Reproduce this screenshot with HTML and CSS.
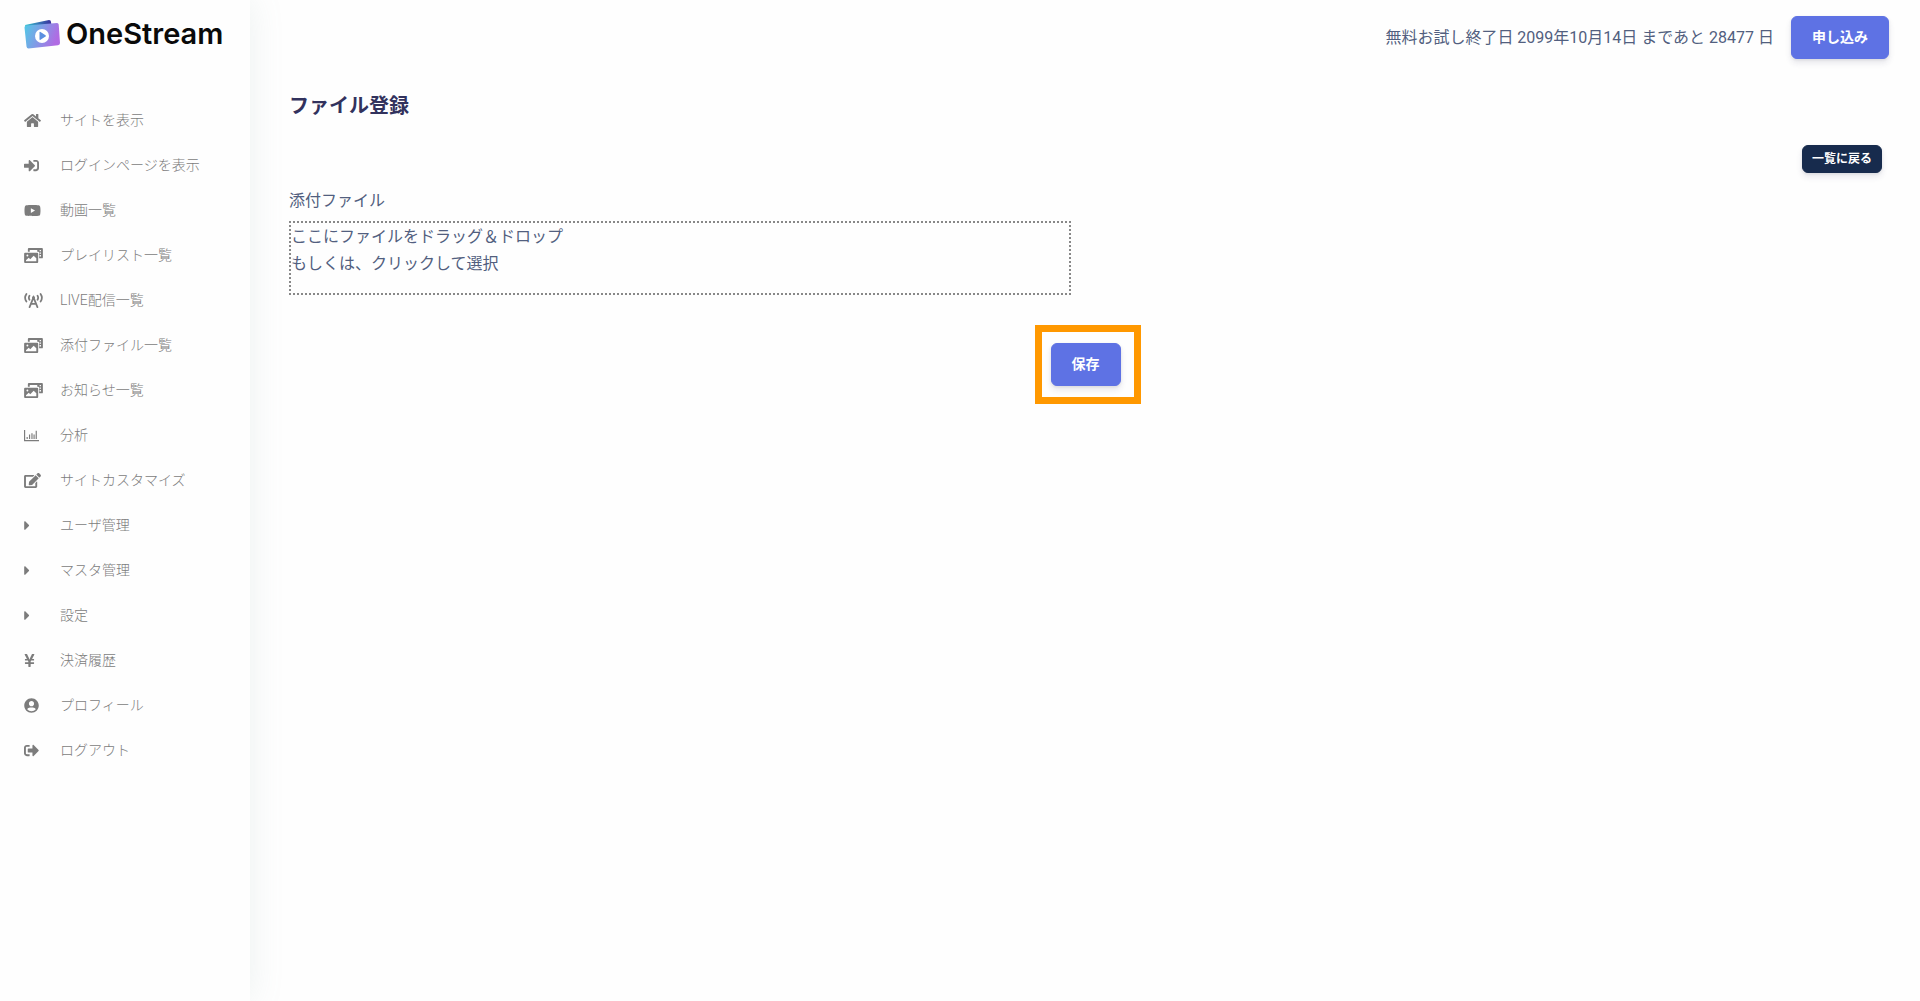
FILE: index.html
```html
<!DOCTYPE html>
<html lang="ja">
<head>
    <meta charset="UTF-8">
    <meta name="viewport" content="width=device-width, initial-scale=1.0">
    <title>ファイル登録 | OneStream</title>
    <link rel="stylesheet" href="styles.css">
</head>
<body>
    <!-- shared icon shapes -->
    <svg class="icon-defs" aria-hidden="true">
        <symbol id="i-home" viewBox="0 0 576 512"><path d="M280.37 148.26L96 300.11V464a16 16 0 0 0 16 16l112.06-.29a16 16 0 0 0 15.92-16V368a16 16 0 0 1 16-16h64a16 16 0 0 1 16 16v95.64a16 16 0 0 0 16 16.05L464 480a16 16 0 0 0 16-16V300L295.67 148.26a12.19 12.19 0 0 0-15.3 0zM571.6 251.47L488 182.56V44.05a12 12 0 0 0-12-12h-56a12 12 0 0 0-12 12v72.61L318.47 43a48 48 0 0 0-61 0L4.34 251.47a12 12 0 0 0-1.6 16.9l25.5 31A12 12 0 0 0 45.15 301l235.22-193.74a12.19 12.19 0 0 1 15.3 0L530.9 301a12 12 0 0 0 16.9-1.6l25.5-31a12 12 0 0 0-1.7-16.93z"/></symbol>
        <symbol id="i-login" viewBox="0 0 512 512"><path d="M416 448h-84c-6.6 0-12-5.4-12-12v-40c0-6.6 5.4-12 12-12h84c17.7 0 32-14.3 32-32V160c0-17.7-14.3-32-32-32h-84c-6.6 0-12-5.4-12-12V76c0-6.6 5.4-12 12-12h84c53 0 96 43 96 96v192c0 53-43 96-96 96zm-47-201L201 79c-15-15-41-4.5-41 17v96H24c-13.3 0-24 10.7-24 24v96c0 13.3 10.7 24 24 24h136v96c0 21.5 26 32 41 17l168-168c9.3-9.4 9.3-24.6 0-34z"/></symbol>
        <symbol id="i-video" viewBox="0 0 576 512"><path d="M549.655 124.083c-6.281-23.65-24.787-42.276-48.284-48.597C458.781 64 288 64 288 64S117.22 64 74.629 75.486c-23.497 6.322-42.003 24.947-48.284 48.597-11.412 42.867-11.412 132.305-11.412 132.305s0 89.438 11.412 132.305c6.281 23.65 24.787 41.5 48.284 47.821C117.22 448 288 448 288 448s170.78 0 213.371-11.486c23.497-6.321 42.003-24.171 48.284-47.821 11.412-42.867 11.412-132.305 11.412-132.305s0-89.438-11.412-132.305zm-317.51 213.508V175.185l142.739 81.205-142.739 81.201z"/></symbol>
        <symbol id="i-media" viewBox="0 0 640 512"><path fill-rule="evenodd" d="M608 0H160a32 32 0 0 0-32 32v96h64V64h256v64h32a32 32 0 0 1 32 32v192h96a32 32 0 0 0 32-32V32a32 32 0 0 0-32-32zM537 64h30a9 9 0 0 1 9 9v30a9 9 0 0 1-9 9h-30a9 9 0 0 1-9-9V73a9 9 0 0 1 9-9zM537 152h30a9 9 0 0 1 9 9v30a9 9 0 0 1-9 9h-30a9 9 0 0 1-9-9v-30a9 9 0 0 1 9-9zM537 240h30a9 9 0 0 1 9 9v30a9 9 0 0 1-9 9h-30a9 9 0 0 1-9-9v-30a9 9 0 0 1 9-9zM32 160h416a32 32 0 0 1 32 32v288a32 32 0 0 1-32 32H32a32 32 0 0 1-32-32V192a32 32 0 0 1 32-32zM112 224a32 32 0 1 0 0 64a32 32 0 1 0 0-64zM64 448h352v-96l-90-91-116 123-54-53-92 85z"/></symbol>
        <symbol id="i-tower" viewBox="0 0 640 512"><path class="stroke" d="M78 32c-62 90-62 170 0 260M562 32c62 90 62 170 0 260M182 92c-28 48-28 92 0 140M458 92c28 48 28 92 0 140"/><path class="stroke" d="M186 484L320 150l134 334M236 370h168"/><circle cx="320" cy="160" r="50"/></symbol>
        <symbol id="i-chart" viewBox="0 0 512 512"><path d="M0 64h40v346h472v40H0zM88 304h40v70H88zM170 226h40v148h-40zM252 176h40v198h-40zM324 226h40v148h-40zM398 90h40v284h-40z"/></symbol>
        <symbol id="i-edit" viewBox="0 0 576 512"><path d="M402.6 83.2l90.2 90.2c3.8 3.8 3.8 10 0 13.8L274.4 405.6l-92.8 10.3c-12.4 1.4-22.9-9.1-21.5-21.5l10.3-92.8L388.8 83.2c3.8-3.8 10-3.8 13.8 0zm162-22.9l-48.8-48.8c-15.2-15.2-39.9-15.2-55.2 0l-35.4 35.4c-3.8 3.8-3.8 10 0 13.8l90.2 90.2c3.8 3.8 10 3.8 13.8 0l35.4-35.4c15.2-15.3 15.2-40 0-55.2zM384 346.2V448H64V128h229.8c3.2 0 6.2-1.3 8.5-3.5l40-40c7.6-7.6 2.2-20.5-8.5-20.5H48C21.5 64 0 85.5 0 112v352c0 26.5 21.5 48 48 48h352c26.5 0 48-21.5 48-48V306.2c0-10.7-12.9-16-20.5-8.5l-40 40c-2.2 2.3-3.5 5.3-3.5 8.5z"/></symbol>
        <symbol id="i-caret" viewBox="0 0 192 512"><path d="M0 384.662V127.338c0-17.818 21.543-26.741 34.142-14.142l128.662 128.662c7.81 7.81 7.81 20.474 0 28.284L34.142 398.804C21.543 411.404 0 402.48 0 384.662z"/></symbol>
        <symbol id="i-yen" viewBox="0 0 384 512"><path d="M351.2 32h-65.3c-4.6 0-8.8 2.6-10.8 6.7l-55.4 113.2c-14.5 34.7-27.1 71.9-27.1 71.9h-1.3s-12.6-37.2-27.1-71.9L108.8 38.7c-2-4.1-6.2-6.7-10.8-6.7H32.8c-9.1 0-14.8 9.7-10.6 17.6L102.3 200H44c-6.6 0-12 5.4-12 12v32c0 6.6 5.4 12 12 12h88.2l19.8 37.2V320H44c-6.6 0-12 5.4-12 12v32c0 6.6 5.4 12 12 12h108v92c0 6.6 5.4 12 12 12h56c6.6 0 12-5.4 12-12v-92h108c6.6 0 12-5.4 12-12v-32c0-6.6-5.4-12-12-12H232v-26.8l19.8-37.2H340c6.6 0 12-5.4 12-12v-32c0-6.6-5.4-12-12-12h-58.3l80.1-150.4c4.3-7.9-1.5-17.6-10.6-17.6z"/></symbol>
        <symbol id="i-user" viewBox="0 0 496 512"><path d="M248 8C111 8 0 119 0 256s111 248 248 248 248-111 248-248S385 8 248 8zm0 96c48.6 0 88 39.4 88 88s-39.4 88-88 88-88-39.4-88-88 39.4-88 88-88zm0 344c-58.7 0-111.3-26.6-146.5-68.2 18.8-35.4 55.6-59.8 98.5-59.8 2.4 0 4.8.4 7.1 1.1 13 4.2 26.6 6.9 40.9 6.9 14.3 0 28-2.7 40.9-6.9 2.3-.7 4.7-1.1 7.1-1.1 42.9 0 79.7 24.4 98.5 59.8C359.3 421.4 306.7 448 248 448z"/></symbol>
        <symbol id="i-logout" viewBox="0 0 512 512"><path d="M497 273L329 441c-15 15-41 4.5-41-17v-96H152c-13.3 0-24-10.7-24-24v-96c0-13.3 10.7-24 24-24h136V88c0-21.4 25.9-32 41-17l168 168c9.3 9.4 9.3 24.6 0 34zM192 436v-40c0-6.6-5.4-12-12-12H96c-17.7 0-32-14.3-32-32V160c0-17.7 14.3-32 32-32h84c6.6 0 12-5.4 12-12V76c0-6.6-5.4-12-12-12H96c-53 0-96 43-96 96v192c0 53 43 96 96 96h84c6.6 0 12-5.4 12-12z"/></symbol>
    </svg>

    <aside class="sidebar">
        <a class="brand" href="#">
            <svg class="brand-mark" viewBox="0 0 36 30" aria-hidden="true">
                <defs>
                    <linearGradient id="card" x1="0" y1="0" x2="1" y2="0.3">
                        <stop offset="0" stop-color="#4fcbe6"/>
                        <stop offset="0.5" stop-color="#7f9ce6"/>
                        <stop offset="1" stop-color="#b06be3"/>
                    </linearGradient>
                    <linearGradient id="back" x1="0" y1="0" x2="1" y2="0">
                        <stop offset="0" stop-color="#35c5cf"/>
                        <stop offset="1" stop-color="#3b2a9c"/>
                    </linearGradient>
                </defs>
                <path fill="url(#back)" d="M1 6L25 1q2 0 2 2l1 8L4 14z"/>
                <path fill="url(#card)" d="M2.500 6.500L33 4q1.500 0 1.700 1.500L36 24q0 2-2 2.200L4.500 29.500q-1.700 0-2-2L.5 8.500q0-1.800 2-2z"/>
                <circle cx="18" cy="17" r="7" fill="#fff"/>
                <path fill="#5b8fe0" d="M15.500 13.500q0-1 1-.5l5 3.300q.8.600 0 1.200l-5 3.300q-1 .500-1-.5z"/>
            </svg>
            <span class="brand-name">OneStream</span>
        </a>
        <nav>
            <ul class="menu">
                <li><a href="#"><span class="menu-icon"><svg width="17" height="15"><use href="#i-home"/></svg></span>サイトを表示</a></li>
                <li><a href="#"><span class="menu-icon"><svg width="15" height="15"><use href="#i-login"/></svg></span>ログインページを表示</a></li>
                <li><a href="#"><span class="menu-icon"><svg width="17" height="15"><use href="#i-video"/></svg></span>動画一覧</a></li>
                <li><a href="#"><span class="menu-icon"><svg width="19" height="15"><use href="#i-media"/></svg></span>プレイリスト一覧</a></li>
                <li><a href="#"><span class="menu-icon"><svg width="19" height="15"><use href="#i-tower"/></svg></span>LIVE配信一覧</a></li>
                <li><a href="#"><span class="menu-icon"><svg width="19" height="15"><use href="#i-media"/></svg></span>添付ファイル一覧</a></li>
                <li><a href="#"><span class="menu-icon"><svg width="19" height="15"><use href="#i-media"/></svg></span>お知らせ一覧</a></li>
                <li><a href="#"><span class="menu-icon"><svg width="15" height="15"><use href="#i-chart"/></svg></span>分析</a></li>
                <li><a href="#"><span class="menu-icon"><svg width="17" height="15"><use href="#i-edit"/></svg></span>サイトカスタマイズ</a></li>
                <li><a href="#"><span class="menu-icon"><svg width="6" height="15"><use href="#i-caret"/></svg></span>ユーザ管理</a></li>
                <li><a href="#"><span class="menu-icon"><svg width="6" height="15"><use href="#i-caret"/></svg></span>マスタ管理</a></li>
                <li><a href="#"><span class="menu-icon"><svg width="6" height="15"><use href="#i-caret"/></svg></span>設定</a></li>
                <li><a href="#"><span class="menu-icon"><svg width="11" height="15"><use href="#i-yen"/></svg></span>決済履歴</a></li>
                <li><a href="#"><span class="menu-icon"><svg width="15" height="15"><use href="#i-user"/></svg></span>プロフィール</a></li>
                <li><a href="#"><span class="menu-icon"><svg width="15" height="15"><use href="#i-logout"/></svg></span>ログアウト</a></li>
            </ul>
        </nav>
    </aside>

    <div class="main">
        <header class="topbar">
            <span>無料お試し終了日 2099年10月14日 まであと 28477 日</span>
            <button type="button" class="btn btn-primary">申し込み</button>
        </header>

        <main class="content">
            <h1>ファイル登録</h1>
            <div class="toolbar">
                <a class="btn btn-dark btn-sm" href="#">一覧に戻る</a>
            </div>
            <form>
                <div class="field">
                    <label for="attachment">添付ファイル</label>
                    <label class="dropzone" for="attachment">
                        ここにファイルをドラッグ＆ドロップ<br>もしくは、クリックして選択
                    </label>
                    <input type="file" id="attachment" class="file-input">
                </div>
                <div class="actions">
                    <div class="highlight">
                        <button type="submit" class="btn btn-primary">保存</button>
                    </div>
                </div>
            </form>
        </main>
    </div>
</body>
</html>
```

FILE: styles.css
```css
* {
    box-sizing: border-box;
}
body {
    display: flex;
    min-height: 100vh;
    margin: 0;
    background: #fefefe;
    color: #525f7f;
    font-family: Roboto, "Noto Sans CJK JP", sans-serif;
    font-size: 16px;
    line-height: 27px;
}
a {
    color: inherit;
    text-decoration: none;
}
.icon-defs {
    position: absolute;
    width: 0;
    height: 0;
}

/* sidebar */
.sidebar {
    flex: 0 0 250px;
    background: #fefefe;
    box-shadow: 0 0 32px rgba(136, 170, 160, 0.15);
}
.brand {
    display: flex;
    align-items: center;
    gap: 6px;
    height: 50px;
    padding: 17px 24px 0;
}
.brand-mark {
    width: 36px;
    height: 30px;
    flex: none;
}
.brand-name {
    color: #0a0a0a;
    font-family: Inter, sans-serif;
    font-size: 29px;
    font-weight: 600;
}
.menu {
    list-style: none;
    margin: 0;
    padding: 48px 0 0;
}
.menu a {
    display: flex;
    align-items: center;
    height: 45px;
    padding: 0 24px;
    color: #7c7c7c;
    font-size: 14px;
    font-weight: 300;
    line-height: 21px;
}
.menu-icon {
    display: flex;
    width: 36px;
}
.menu-icon svg {
    fill: currentColor;
}
.stroke {
    fill: none;
    stroke: currentColor;
    stroke-width: 60;
    stroke-linecap: round;
}

/* main column */
.main {
    flex: 1;
    min-width: 0;
}
.topbar {
    display: flex;
    justify-content: flex-end;
    align-items: center;
    gap: 17px;
    padding: 16px 31px 0;
}
.content {
    padding: 32px 38px 32px 39px;
}
h1 {
    margin: 0;
    color: #32325d;
    font-size: 20px;
    font-weight: 600;
    line-height: 30px;
}
.toolbar {
    display: flex;
    justify-content: flex-end;
    padding: 24px 0 14px;
}
.btn {
    padding: 10px 20px;
    border: 1px solid;
    border-radius: 6px;
    color: #fff;
    font-family: inherit;
    font-size: 14px;
    font-weight: 700;
    line-height: 21px;
    box-shadow: 0 4px 6px rgba(50, 50, 93, 0.11), 0 1px 3px rgba(0, 0, 0, 0.08);
    cursor: pointer;
}
.btn-primary {
    background: #5e72e4;
    border-color: #5e72e4;
}
.btn-dark {
    background: #172b4d;
    border-color: #172b4d;
}
.btn-sm {
    padding: 4px 9px;
    font-size: 12px;
    line-height: 18px;
}

/* form */
.field {
    display: flex;
    flex-direction: column;
    gap: 7px;
    width: calc(50% - 15px);
}
.dropzone {
    padding-bottom: 16px;
    border: 2px dotted #888;
    cursor: pointer;
}
.file-input {
    position: absolute;
    width: 1px;
    height: 1px;
    opacity: 0;
}
.actions {
    display: flex;
    justify-content: center;
    padding-top: 48px;
}

/* marker frame drawn over the save button */
.highlight {
    position: relative;
    display: flex;
}
.highlight::after {
    content: "";
    position: absolute;
    inset: -18px -20px -18px -16px;
    border: 7px solid #ff9800;
    pointer-events: none;
}
```
